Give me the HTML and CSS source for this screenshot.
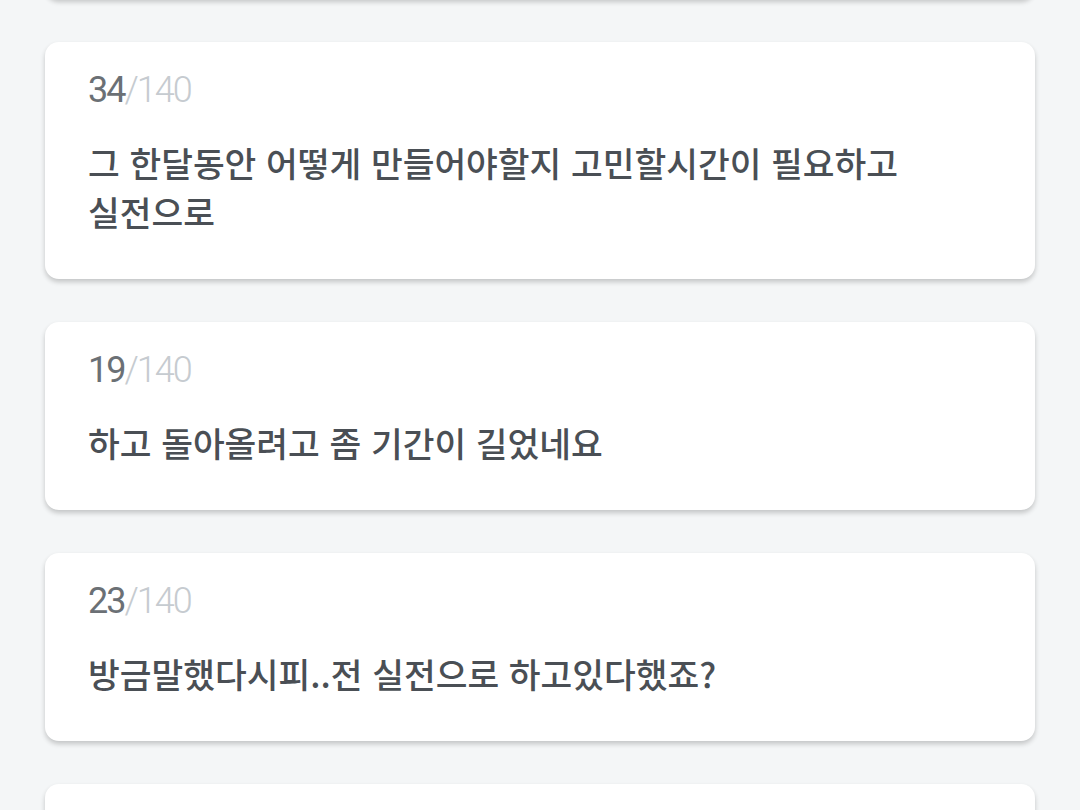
FILE: index.html
```html
<!DOCTYPE html>
<html lang="ko">
<head>
<meta charset="utf-8">
<title>메모</title>
<link rel="stylesheet" href="styles.css">
</head>
<body>
<main class="list">
  <section class="card card--partial"></section>
  <section class="card">
    <div class="counter"><span class="count">34</span><span class="max">/140</span></div>
    <p class="text">그 한달동안 어떻게 만들어야할지 고민할시간이 필요하고<br>실전으로</p>
  </section>
  <section class="card">
    <div class="counter"><span class="count">19</span><span class="max">/140</span></div>
    <p class="text">하고 돌아올려고 좀 기간이 길었네요</p>
  </section>
  <section class="card">
    <div class="counter"><span class="count">23</span><span class="max">/140</span></div>
    <p class="text">방금말했다시피..전 실전으로 하고있다했죠?</p>
  </section>
  <section class="card card--partial"></section>
</main>
</body>
</html>
```

FILE: styles.css
```css
html, body {
  margin: 0;
  padding: 0;
  background: #f4f6f7;
  font-family: "Noto Sans CJK KR", "Noto Sans", sans-serif;
  overflow: hidden;
}

.list {
  display: flex;
  flex-direction: column;
  gap: 43px;
  padding: 0 45px;
  margin-top: -189px;
}

.card {
  background: #ffffff;
  border-radius: 14px;
  box-shadow: 0 3px 5px rgba(0, 0, 0, 0.2);
  padding: 28px 43px 43px;
}

.card--partial {
  height: 188px;
  padding: 0;
}

.counter {
  font-family: Roboto, "Noto Sans", sans-serif;
  font-weight: 300;
  font-size: 36px;
  letter-spacing: -2px;
  line-height: 40px;
  height: 40px;
  margin-bottom: 28px;
}

.count {
  color: #6b7075;
  font-weight: 400;
}

.max {
  color: #c6cbd0;
}

.text {
  margin: 0;
  font-size: 34.5px;
  font-weight: 500;
  line-height: 49px;
  color: #4a4f55;
}
```
